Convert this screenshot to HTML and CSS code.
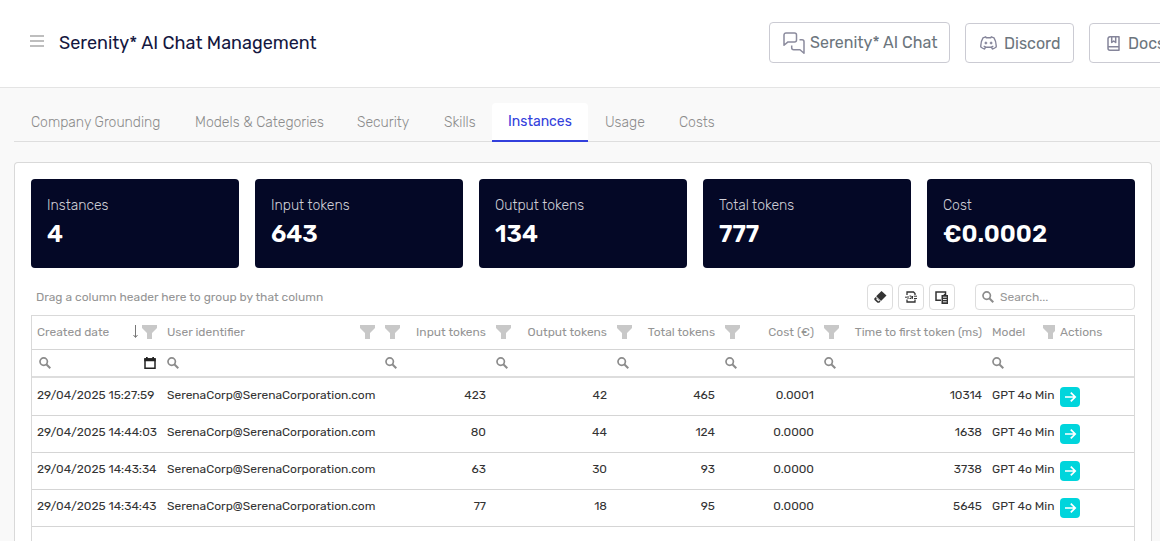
FILE: index.html
```html
<!DOCTYPE html>
<html lang="en">
<head>
<meta charset="utf-8">
<meta name="viewport" content="width=device-width, initial-scale=1">
<title>Serenity* AI Chat Management</title>
<link rel="stylesheet" href="styles.css">
</head>
<body>
<svg class="sprite" aria-hidden="true">
  <symbol id="funnel" viewBox="0 0 15 14"><path d="M0 0h15v3l-5 5v6H5V8L0 3z" fill="#c8c8c8"/></symbol>
  <symbol id="search" viewBox="0 0 12 12"><circle cx="4.7" cy="4.6" r="3.7" fill="none" stroke="#8c8c8c" stroke-width="1.7"/><path d="M7.3 7.2l4 4" stroke="#8c8c8c" stroke-width="2"/></symbol>
  <symbol id="arrow" viewBox="0 0 20 20"><path d="M5 10h10M10.8 5.6L15.2 10l-4.4 4.4" fill="none" stroke="#fff" stroke-width="1.7"/></symbol>
</svg>
<header class="header">
  <div class="brand">
    <button class="menu" aria-label="Menu"><svg width="14" height="12" viewBox="0 0 14 12"><path d="M0 1h14M0 6h14M0 11h14" stroke="#a9a9a9" stroke-width="1.4"/></svg></button>
    <h1 class="title">Serenity* AI Chat Management</h1>
  </div>
  <nav class="links" aria-label="Resources">
    <a class="link link-chat" href="#"><svg width="22" height="22" viewBox="0 0 22 22" fill="none" stroke="#8b8b9d" stroke-width="1.5" stroke-linejoin="round"><path d="M3 .9h8.5a2 2 0 0 1 2 2v5a2 2 0 0 1-2 2H5L1 13.3V2.9a2 2 0 0 1 2-2z"/><path d="M16.5 7.7H19a2 2 0 0 1 2 2v11.5l-4-3.5h-6.3a2 2 0 0 1-2-2v-2.3"/></svg>Serenity* AI Chat</a>
    <a class="link link-discord" href="#"><svg width="17" height="14" viewBox="0 0 17 14" fill="none" stroke="#85859a" stroke-width="1.4" stroke-linejoin="round"><path d="M6.3 1.8L5.7.8 3 1.8C1.3 4.5.6 7.6.8 11c1.2 1 2.5 1.7 3.8 2l1-1.8h5.8l1 1.8c1.3-.3 2.6-1 3.8-2 .2-3.4-.5-6.5-2.2-9.2L11.3.8l-.6 1z"/><path d="M3.7 10.2l2 .9M13.3 10.2l-2 .9"/><circle cx="5.9" cy="7" r="1" fill="#85859a" stroke-width=".8"/><circle cx="11.1" cy="7" r="1" fill="#85859a" stroke-width=".8"/></svg>Discord</a>
    <a class="link link-docs" href="#"><svg width="13" height="15" viewBox="0 0 13 15" fill="none" stroke="#85859a" stroke-width="1.5" stroke-linejoin="round"><path d="M12 .8H3a2 2 0 0 0-2 2v9.4a2 2 0 0 0 2 2h9zM1.200 10.700H12M4.700 1v5.500l2-1.500 2 1.500V1"/></svg>Docs</a>
  </nav>
</header>
<main class="main">
  <nav class="tabs" aria-label="Sections">
    <a class="tab" href="#">Company Grounding</a>
    <a class="tab" href="#">Models &amp; Categories</a>
    <a class="tab" href="#">Security</a>
    <a class="tab" href="#">Skills</a>
    <a class="tab active" href="#" aria-current="page">Instances</a>
    <a class="tab" href="#">Usage</a>
    <a class="tab" href="#">Costs</a>
  </nav>
  <section class="panel">
    <div class="stats">
      <div class="stat"><div class="stat-label">Instances</div><div class="stat-value">4</div></div>
      <div class="stat"><div class="stat-label">Input tokens</div><div class="stat-value">643</div></div>
      <div class="stat"><div class="stat-label">Output tokens</div><div class="stat-value">134</div></div>
      <div class="stat"><div class="stat-label">Total tokens</div><div class="stat-value">777</div></div>
      <div class="stat"><div class="stat-label">Cost</div><div class="stat-value">€0.0002</div></div>
    </div>
    <div class="toolbar">
      <span class="group-hint">Drag a column header here to group by that column</span>
      <button class="tool" aria-label="Clear filters"><svg width="14" height="14" viewBox="0 0 14 14"><path d="M8.500 1L13.500 5.500 8 11 3.200 6.200z" fill="#333"/><path d="M2.800 7l4.700 4.600-1.300 1.200H4.500L1.300 9.700V8.400z" fill="#333"/><path d="M3.500 8.700l2.300 2.300" stroke="#fff" stroke-width="1.200"/></svg></button>
      <button class="tool" aria-label="Export"><svg width="12" height="12" viewBox="0 0 12 12" fill="none" stroke="#333" stroke-width="1.300"><path d="M2 4V1h6.500L10 2.500V4M2 8.500V11h8V8.500"/><path d="M0 6.200h2M3 5v3M4.500 5h1.700v2.500H4.500M7.500 5v2.800M8.800 5.200H12M9 7.500h3" stroke-width="1"/></svg></button>
      <button class="tool" aria-label="Column chooser"><svg width="14" height="13" viewBox="0 0 14 13"><path d="M6 9.300H1V1h9.500v2" fill="none" stroke="#333" stroke-width="1.500"/><path d="M6.500 4h2l.5-1h2l.5 1H13v9H6.500z" fill="#333"/><path d="M8 6.200h3.700M8 8.500h3.700M8 10.800h3.700" stroke="#fff" stroke-width=".9"/></svg></button>
      <label class="search"><svg class="icon-search"><use href="#search"/></svg><input type="text" placeholder="Search..." aria-label="Search"></label>
    </div>
    <div class="grid">
      <table class="table">
        <colgroup><col class="c-date"><col class="c-user"><col class="c-input"><col class="c-output"><col class="c-total"><col class="c-cost"><col class="c-time"><col class="c-model"><col></colgroup>
        <thead>
          <tr class="heads">
            <th><div class="head"><span class="name">Created date</span><svg class="sort" viewBox="0 0 5 13"><path d="M2.500 0v12M.5 10l2 2.500 2-2.500" fill="none" stroke="#777"/></svg><svg class="funnel"><use href="#funnel"/></svg></div></th>
            <th><div class="head"><span class="name">User identifier</span><svg class="funnel"><use href="#funnel"/></svg></div></th>
            <th><div class="head reverse"><span class="name">Input tokens</span><svg class="funnel"><use href="#funnel"/></svg></div></th>
            <th><div class="head reverse"><span class="name">Output tokens</span><svg class="funnel"><use href="#funnel"/></svg></div></th>
            <th><div class="head reverse"><span class="name">Total tokens</span><svg class="funnel"><use href="#funnel"/></svg></div></th>
            <th><div class="head reverse"><span class="name">Cost (€)</span><svg class="funnel"><use href="#funnel"/></svg></div></th>
            <th><div class="head reverse"><span class="name">Time to first token (ms)</span><svg class="funnel"><use href="#funnel"/></svg></div></th>
            <th class="clip"><div class="head model-head"><span class="name">Model</span><svg class="funnel"><use href="#funnel"/></svg></div></th>
            <th>Actions</th>
          </tr>
          <tr class="filters">
            <td><div class="filter date-filter"><svg class="icon-search"><use href="#search"/></svg><input type="text" aria-label="Filter created date"><button class="calendar" aria-label="Choose date"><svg width="12" height="12" viewBox="0 0 12 12"><path d="M1 2h10v9.200H1z" fill="none" stroke="#222" stroke-width="1.500"/><path d="M.3 1.300h11.400v3H.3zM2 0h1.700v2H2zM8.300 0H10v2H8.300z" fill="#222"/></svg></button></div></td>
            <td><div class="filter"><svg class="icon-search"><use href="#search"/></svg><input type="text" aria-label="Filter user identifier"></div></td>
            <td><div class="filter"><svg class="icon-search"><use href="#search"/></svg><input type="text" aria-label="Filter input tokens"></div></td>
            <td><div class="filter"><svg class="icon-search"><use href="#search"/></svg><input type="text" aria-label="Filter output tokens"></div></td>
            <td><div class="filter"><svg class="icon-search"><use href="#search"/></svg><input type="text" aria-label="Filter total tokens"></div></td>
            <td><div class="filter"><svg class="icon-search"><use href="#search"/></svg><input type="text" aria-label="Filter cost"></div></td>
            <td><div class="filter"><svg class="icon-search"><use href="#search"/></svg><input type="text" aria-label="Filter time to first token"></div></td>
            <td><div class="filter"><svg class="icon-search"><use href="#search"/></svg><input type="text" aria-label="Filter model"></div></td>
            <td></td>
          </tr>
        </thead>
        <tbody>
          <tr><td>29/04/2025 15:27:59</td><td>SerenaCorp@SerenaCorporation.com</td><td class="num">423</td><td class="num">42</td><td class="num">465</td><td class="num">0.0001</td><td class="num">10314</td><td class="clip">GPT 4o Min</td><td><button class="open" aria-label="Open instance"><svg width="20" height="20"><use href="#arrow"/></svg></button></td></tr>
          <tr><td>29/04/2025 14:44:03</td><td>SerenaCorp@SerenaCorporation.com</td><td class="num">80</td><td class="num">44</td><td class="num">124</td><td class="num">0.0000</td><td class="num">1638</td><td class="clip">GPT 4o Min</td><td><button class="open" aria-label="Open instance"><svg width="20" height="20"><use href="#arrow"/></svg></button></td></tr>
          <tr><td>29/04/2025 14:43:34</td><td>SerenaCorp@SerenaCorporation.com</td><td class="num">63</td><td class="num">30</td><td class="num">93</td><td class="num">0.0000</td><td class="num">3738</td><td class="clip">GPT 4o Min</td><td><button class="open" aria-label="Open instance"><svg width="20" height="20"><use href="#arrow"/></svg></button></td></tr>
          <tr><td>29/04/2025 14:34:43</td><td>SerenaCorp@SerenaCorporation.com</td><td class="num">77</td><td class="num">18</td><td class="num">95</td><td class="num">0.0000</td><td class="num">5645</td><td class="clip">GPT 4o Min</td><td><button class="open" aria-label="Open instance"><svg width="20" height="20"><use href="#arrow"/></svg></button></td></tr>
        </tbody>
      </table>
    </div>
  </section>
</main>
</body>
</html>
```
FILE: styles.css
```css
* { box-sizing: border-box; }
body {
  margin: 0;
  height: 100vh;
  display: flex;
  flex-direction: column;
  overflow: hidden;
  background: #f9f9f9;
  color: #333;
  font-family: Rubik, Roboto, "Liberation Sans", sans-serif;
  font-size: 12px;
}
button, input { font: inherit; padding: 0; border: 0; background: none; }
button { cursor: pointer; }
svg { display: block; flex: none; }
a { color: inherit; text-decoration: none; }
.sprite { position: absolute; width: 0; height: 0; }

.header {
  display: grid;
  grid-template-columns: 739px auto;
  align-items: center;
  flex: none;
  padding: 22px 0 24px 30px;
  border-bottom: 1px solid #e4e4e4;
  background: #fff;
  overflow: hidden;
}
.brand { display: flex; align-items: center; gap: 15px; }
.menu { padding-bottom: 4px; }
.title { margin: 0; font-size: 18px; line-height: 24px; font-weight: 400; color: #14173f; }
.links { display: flex; align-items: flex-end; gap: 15px; white-space: nowrap; }
.link {
  display: flex;
  align-items: center;
  flex: none;
  height: 40px;
  border: 1px solid #cbcbd3;
  border-radius: 4px;
  background: #fff;
  color: #6c757d;
  font-size: 16px;
}
.link-chat { width: 181px; height: 41px; padding-left: 13px; gap: 5px; }
.link-discord { width: 109px; padding-left: 14px; gap: 7px; }
.link-docs { width: 93px; padding-left: 17px; gap: 8px; }

.main {
  flex: 1;
  min-height: 0;
  display: flex;
  flex-direction: column;
  gap: 20px;
  padding: 15px 0 0 14px;
}
.tabs {
  display: grid;
  grid-template-columns: 164px 162px 87px 65px 96px 74px 70px;
  flex: none;
  height: 39px;
  border-bottom: 1px solid #dedede;
}
.tab {
  height: 39px;
  padding-left: 17px;
  line-height: 39px;
  font-size: 14px;
  font-weight: 300;
  color: #8c8c8c;
  white-space: nowrap;
}
.tab.active {
  padding-left: 16px;
  line-height: 37px;
  border-bottom: 2px solid #3340dc;
  border-radius: 4px 4px 0 0;
  background: #fff;
  color: #3340dc;
  font-weight: 400;
}

.panel {
  flex: 1;
  min-height: 0;
  display: flex;
  flex-direction: column;
  margin-right: 8px;
  padding: 16px 16px 0;
  border: 1px solid #d9d9d9;
  border-bottom: 0;
  border-radius: 4px 4px 0 0;
  background: #fff;
}
.stats { display: grid; grid-template-columns: repeat(5, 1fr); gap: 16px; }
.stat { height: 89px; padding: 16px; border-radius: 4px; background: #040826; color: #fff; }
.stat-label { font-size: 14px; font-weight: 300; line-height: 21px; color: #d0d0d7; }
.stat-value { font-size: 24px; font-weight: 600; line-height: 36px; }

.toolbar { display: flex; align-items: center; gap: 5px; margin: 16px 0 5px; }
.group-hint { flex: 1; padding-left: 5px; color: #959595; }
.tool {
  display: flex;
  align-items: center;
  justify-content: center;
  width: 26px;
  height: 26px;
  border: 1px solid #ddd;
  border-radius: 4px;
}
.search {
  display: flex;
  align-items: center;
  gap: 6px;
  width: 160px;
  height: 26px;
  margin-left: 15px;
  padding: 0 6px;
  border: 1px solid #ddd;
  border-radius: 4px;
}
.search input { flex: 1; min-width: 0; color: #333; outline: 0; }
.search input::placeholder { color: #999; opacity: 1; }
.icon-search { width: 12px; height: 12px; }

.grid { flex: 1; min-height: 0; border: solid #d9d9d9; border-width: 1px 1px 0; }
.table { width: 100%; table-layout: fixed; border-spacing: 0; }
.c-date { width: 130px; }
.c-user { width: 218px; }
.c-input { width: 111px; }
.c-output { width: 121px; }
.c-total { width: 108px; }
.c-cost { width: 99px; }
.c-time { width: 168px; }
.c-model { width: 68px; }
th, td { padding: 0 5px; border-bottom: 1px solid #d5d5d5; text-align: left; white-space: nowrap; }
th { height: 34px; padding-bottom: 2px; font-weight: 400; color: #959595; }
.head { display: flex; align-items: center; gap: 4px; }
.name { flex: 1; }
.reverse { flex-direction: row-reverse; gap: 0; }
.reverse .name { text-align: right; }
.funnel { width: 15px; height: 14px; }
.sort { width: 5px; height: 13px; }
.clip { overflow: hidden; padding-right: 0; }
.model-head { width: 66px; }
.filters td { height: 28px; border-bottom: 2px solid #ddd; }
.filter { display: flex; align-items: center; height: 26px; gap: 4px; }
.filter input { flex: 1; width: 0; min-width: 0; outline: 0; }
.date-filter { padding: 0 1px 0 2px; }
tbody td { height: 37px; padding-top: 7px; line-height: 18px; vertical-align: top; }
tbody tr:first-child td { height: 38px; padding-top: 8px; }
.num { text-align: right; }
.open {
  display: block;
  width: 20px;
  height: 20px;
  margin-top: 1px;
  border-radius: 4px;
  background: #00d5dc;
}
```
